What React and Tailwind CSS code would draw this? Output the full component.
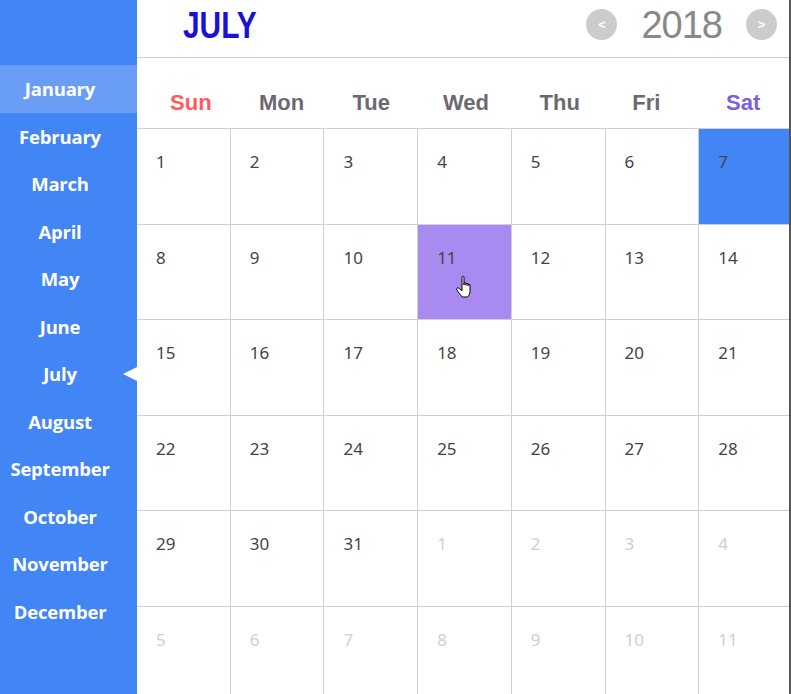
import React from "react";

const months = [
  "January", "February", "March", "April", "May", "June",
  "July", "August", "September", "October", "November", "December",
];

const weekdays = [
  { name: "Sun", color: "text-[#ff5b5b]", shift: "pl-[14px]" },
  { name: "Mon", color: "text-[#6d6870]", shift: "pl-[8px]" },
  { name: "Tue", color: "text-[#6d6870]", shift: "" },
  { name: "Wed", color: "text-[#6d6870]", shift: "pl-[2px]" },
  { name: "Thu", color: "text-[#6d6870]", shift: "pl-[2px]" },
  { name: "Fri", color: "text-[#6d6870]", shift: "pr-[12px]" },
  { name: "Sat", color: "text-[#7d5fdc]", shift: "pr-[6px]" },
];

// July 2018 starts on a Sunday: 31 days, then spill into August
const days = [];
for (let d = 1; d <= 31; d++) days.push({ n: d, current: true });
for (let d = 1; days.length < 42; d++) days.push({ n: d, current: false });

function HandCursor() {
  return (
    <svg width="20" height="24" viewBox="0 0 20 24" className="absolute left-[37px] top-[50px]">
      <path
        d="M7 2.2C7 0.9 9 0.9 9 2.2L9 10L9 8.6C9 7.4 11 7.4 11 8.6L11 10.2L11 9.2C11 8 13 8 13 9.2L13 10.8L13 10C13 8.9 15 8.9 15 10L15 16.2C15 18.8 14 20.6 12.6 22L7.2 22C5.8 20.3 3.5 17.6 1.8 14.8C1.1 13.5 2.5 12.2 3.6 13.1L7 15.8Z"
        fill="#fff"
        stroke="#000"
        strokeWidth="1"
        strokeLinejoin="round"
      />
    </svg>
  );
}

function Arrow({ dir }) {
  return (
    <div className="w-[31px] h-[31px] rounded-full bg-[#cccccc] flex items-center justify-center text-white text-[13px] font-bold leading-none font-['Liberation_Sans',sans-serif]">
      {dir === "left" ? "<" : ">"}
    </div>
  );
}

export default function App() {
  return (
    <div className="w-[791px] h-[694px] flex overflow-hidden bg-white">
      <aside className="w-[137px] shrink-0 bg-[#4285f4] pt-[65px] font-['Open_Sans',sans-serif]">
        {months.map((m, i) => (
          <div
            key={m}
            className={`relative h-[47.5px] flex items-center justify-center pr-[17px] pt-[1px] text-white text-[18.5px] font-bold tracking-[-0.2px] ${
              i === 0 ? "bg-[#6a9df6]" : ""
            }`}
          >
            {m}
            {i === 6 && (
              <span className="absolute right-0 top-1/2 -translate-y-1/2 w-0 h-0 border-y-[7px] border-y-transparent border-r-[14px] border-r-white" />
            )}
          </div>
        ))}
      </aside>

      <main className="flex-1 flex flex-col border-r-2 border-[#555] overflow-hidden">
        <header className="h-[58px] shrink-0 border-b border-[#d0d0d0] flex items-center justify-between pl-[46px] pr-[12px]">
          <h1 className="text-[36px] font-bold leading-none text-[#1c0fd8] font-['Liberation_Sans',sans-serif] origin-left scale-x-[0.83] mt-[-6px]">
            JULY
          </h1>
          <div className="flex items-center gap-[24px] mt-[-8px]">
            <Arrow dir="left" />
            <span className="text-[38px] leading-none text-[#888] font-['Liberation_Sans',sans-serif] tracking-[-1px]">
              2018
            </span>
            <Arrow dir="right" />
          </div>
        </header>

        <div className="w-[656px] h-[71px] shrink-0 grid grid-cols-7 border-b border-[#d0d0d0] font-['Liberation_Sans',sans-serif]">
          {weekdays.map((w) => (
            <div key={w.name} className={`flex items-center justify-center pt-[18px] text-[22px] font-bold ${w.color} ${w.shift}`}>
              {w.name}
            </div>
          ))}
        </div>

        <div className="w-[656px] shrink-0 grid grid-cols-7 font-['Noto_Sans',sans-serif]">
          {days.map((d, i) => {
            let bg = "";
            if (d.current && d.n === 7) bg = "bg-[#4285f4]";
            if (d.current && d.n === 11) bg = "bg-[#a98af0]";
            return (
              <div
                key={i}
                className={`relative h-[95.5px] border-r border-b border-[#d0d0d0] pl-[19px] pt-[21px] text-[17px] leading-[24px] ${bg} ${
                  d.current ? "text-[#444]" : "text-[#cfcfcf]"
                }`}
              >
                {d.n}
                {d.current && d.n === 11 && <HandCursor />}
              </div>
            );
          })}
        </div>
      </main>
    </div>
  );
}
